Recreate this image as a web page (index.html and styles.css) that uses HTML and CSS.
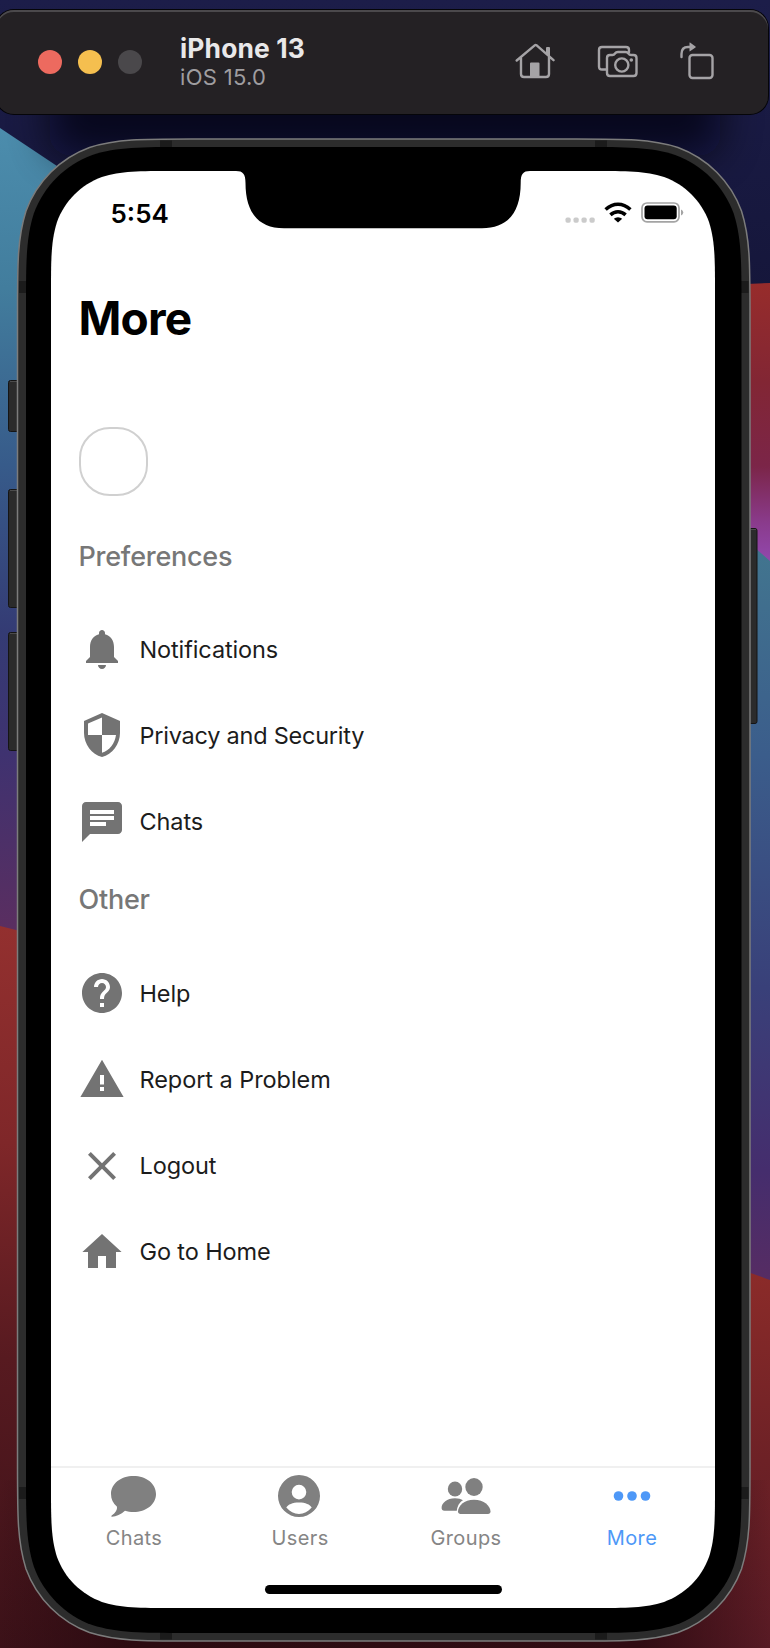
FILE: index.html
```html
<!DOCTYPE html>
<html lang="en">
<head>
<meta charset="utf-8">
<title>iPhone 13 – More</title>
<link rel="stylesheet" href="styles.css">
</head>
<body>
<div class="desktop">
  <svg class="backdrop" viewBox="0 0 770 1648" aria-hidden="true">
    <defs>
      <linearGradient id="navy" gradientUnits="userSpaceOnUse" x1="0" y1="0" x2="0" y2="300"><stop offset="0" stop-color="#1c1d49"/><stop offset="1" stop-color="#15163a"/></linearGradient>
      <linearGradient id="leftBlue" gradientUnits="userSpaceOnUse" x1="0" y1="128" x2="0" y2="930">
        <stop offset="0" stop-color="#4c8dad"/><stop offset=".2" stop-color="#427d9d"/><stop offset=".42" stop-color="#375b8a"/><stop offset=".63" stop-color="#343b74"/><stop offset=".78" stop-color="#3f3270"/><stop offset="1" stop-color="#5a2e60"/>
      </linearGradient>
      <linearGradient id="leftRed" gradientUnits="userSpaceOnUse" x1="0" y1="925" x2="0" y2="1648">
        <stop offset="0" stop-color="#93302f"/><stop offset=".3" stop-color="#7f2729"/><stop offset=".6" stop-color="#571a20"/><stop offset="1" stop-color="#3b1118"/>
      </linearGradient>
      <linearGradient id="rightRed" gradientUnits="userSpaceOnUse" x1="0" y1="283" x2="0" y2="565">
        <stop offset="0" stop-color="#972c2b"/><stop offset=".35" stop-color="#822634"/><stop offset=".65" stop-color="#7b2548"/><stop offset=".85" stop-color="#8a3b8c"/><stop offset="1" stop-color="#9349b0"/>
      </linearGradient>
      <linearGradient id="rightBlue" gradientUnits="userSpaceOnUse" x1="0" y1="550" x2="0" y2="1280">
        <stop offset="0" stop-color="#42758f"/><stop offset=".28" stop-color="#3b5d8b"/><stop offset=".6" stop-color="#394079"/><stop offset=".85" stop-color="#452d6d"/><stop offset="1" stop-color="#562c63"/>
      </linearGradient>
      <linearGradient id="rightDark" gradientUnits="userSpaceOnUse" x1="0" y1="1273" x2="0" y2="1648">
        <stop offset="0" stop-color="#8b2b29"/><stop offset=".5" stop-color="#6d2126"/><stop offset="1" stop-color="#571a24"/>
      </linearGradient>
      <linearGradient id="bottom" x1="0" y1="0" x2="1" y2="0">
        <stop offset="0" stop-color="#2c0b11" stop-opacity="0"/><stop offset=".17" stop-color="#2c0b11"/><stop offset=".83" stop-color="#300c13"/><stop offset="1" stop-color="#300c13" stop-opacity="0"/>
      </linearGradient>
      <filter id="soft" x="-20%" y="-100%" width="140%" height="300%"><feGaussianBlur stdDeviation="20"/></filter>
    </defs>
    <rect width="770" height="1648" fill="url(#navy)"/>
    <path d="M0 128L60 168V940H0Z" fill="url(#leftBlue)"/>
    <path d="M0 926L60 941V1648H0Z" fill="url(#leftRed)"/>
    <path d="M60 1500H400V1648H60Z" fill="url(#leftRed)"/>
    <path d="M400 1500H770V1648H400Z" fill="url(#rightDark)"/>
    <path d="M700 286L770 283V570H700Z" fill="url(#rightRed)"/>
    <path d="M700 500L770 561V1290H700Z" fill="url(#rightBlue)"/>
    <path d="M700 1255L770 1280V1648H700Z" fill="url(#rightDark)"/>
    <rect y="1480" width="770" height="168" fill="url(#bottom)"/>
    <rect x="50" y="70" width="670" height="85" rx="20" fill="#05060f" filter="url(#soft)" opacity=".7"/>

    <g fill="#2b2b2b" stroke="#151515">
      <rect x="8.500" y="380.500" width="14" height="51" rx="2"/>
      <rect x="8.500" y="489.500" width="14" height="118" rx="2"/>
      <rect x="8.500" y="632.500" width="14" height="118" rx="2"/>
      <rect x="745" y="528.500" width="12" height="195" rx="2"/>
    </g>
    <path class="button-shine" d="M10 381.500H18M10 490.500H18M10 633.500H18M751 529.500H756"/>

    <path class="rim" d="M191.800 139H575.700C625.900 139 651 139 678 147.500C707.500 158.300 730.700 181.500 741.500 211C750 238 750 263 750 313V1466.700C750 1516.900 750 1542 741.500 1569C730.700 1598.500 707.500 1621.700 678 1632.500C651 1641 625.900 1641 575.700 1641H191.800C141.600 1641 116.500 1641 89.500 1632.500C60 1621.700 36.800 1598.500 26 1569C17.500 1542 17.500 1516.900 17.500 1466.700V313C17.500 263 17.500 238 26 211C36.800 181.500 60 158.300 89.500 147.500C116.500 139 141.600 139 191.800 139Z"/>
    <path fill="#1b1b1b" d="M160 140.500H172V148H160ZM595 140.500H607V148H595ZM160 1632H172V1639.500H160ZM595 1632H607V1639.500H595ZM19 281H27V293H19ZM741 281H748.500V293H741ZM19 1487H27V1499H19ZM741 1487H748.500V1499H741Z"/>
    <path fill="#000" d="M186.500 147H581C627.200 147 650.300 147 675.200 154.900C702.400 164.800 723.700 186.100 733.600 213.300C741.500 238.200 741.500 261.300 741.500 307.500V1472.500C741.500 1518.700 741.500 1541.800 733.600 1566.700C723.700 1593.900 702.400 1615.200 675.200 1625.100C650.300 1633 627.200 1633 581 1633H186.500C140.300 1633 117.200 1633 92.300 1625.100C65.100 1615.200 43.800 1593.900 33.900 1566.700C26 1541.800 26 1518.700 26 1472.500V307.500C26 261.300 26 238.200 33.900 213.300C43.800 186.100 65.100 164.800 92.300 154.900C117.200 147 140.300 147 186.500 147Z"/>
    <path fill="#fff" d="M174.200 171H591.800C627.300 171 645 171 664.100 177C685 184.600 701.400 201 709 221.900C715 241 715 258.700 715 294.200V1484.800C715 1520.300 715 1538 709 1557.100C701.400 1578 685 1594.400 664.100 1602C645 1608 627.300 1608 591.800 1608H174.200C138.700 1608 121 1608 101.900 1602C81 1594.400 64.600 1578 57 1557.100C51 1538 51 1520.300 51 1484.800V294.200C51 258.700 51 241 57 221.900C64.600 201 81 184.600 101.900 177C121 171 138.700 171 174.200 171Z"/>
    <path fill="#000" d="M236 170V171C243 171 245.500 174 245.500 183C245.500 212 258 228.300 284 228.300H482C508 228.300 520.700 212 520.700 183C520.700 174 523 171 530 171V170Z"/>
  </svg>

  <header class="toolbar">
    <div class="lights"><i class="light red"></i><i class="light yellow"></i><i class="light off"></i></div>
    <div class="device"><strong class="device-name">iPhone 13</strong><span class="device-os">iOS 15.0</span></div>
    <div class="tools">
      <svg width="40" height="38" viewBox="0 0 40 38" class="tool"><path d="M1.700 18.500L20 3.200Q20.700 2.700 21.400 3.200L38.500 18.200M6 16V32Q6 35 9 35H31Q34 35 34 32V15"/><path class="solid" d="M15 21.500Q15 20.500 16 20.500H23.500Q24.500 20.500 24.500 21.500V35H15ZM31 6Q31 5 32 5H34Q35 5 35 6V15.500L31 12Z"/></svg>
      <svg width="41" height="34" viewBox="0 0 41 34" class="tool"><path d="M9 25.500H5Q2 25.500 2 22.500V6Q2 3 5 3H29Q32 3 32 6V8M10 14Q10 11 13 11H15.500Q17 11 18 9.500Q19 8 21 8H28.500Q30.500 8 31.500 9.500Q32.500 11 34 11H36.500Q39.500 11 39.500 14V29Q39.500 32 36.500 32H13Q10 32 10 29Z"/><circle cx="24.800" cy="21" r="6.600"/><circle class="solid" cx="34.300" cy="16" r="1.800"/></svg>
      <svg width="34" height="38" viewBox="0 0 34 38" class="tool"><rect x="9.500" y="13" width="23" height="23" rx="3"/><path d="M1.500 15V12Q1.500 5 8 5H10.500"/><path class="solid" d="M9.500 .8Q9.500 .2 10 .6L15.500 4.500Q16 5 15.500 5.500L10 9.300Q9.500 9.600 9.500 9Z"/></svg>
    </div>
  </header>

  <main class="screen">
    <div class="status">
      <span class="time">5:54</span>
      <div class="signals">
        <svg width="30" height="6" viewBox="0 0 30 6" class="dots"><g fill="#cbcbcb"><rect x=".5" y=".5" width="5.200" height="5.200" rx="1.700"/><rect x="8.500" y=".5" width="5.200" height="5.200" rx="1.700"/><rect x="16.500" y=".5" width="5.200" height="5.200" rx="1.700"/><rect x="24.500" y=".5" width="5.200" height="5.200" rx="1.700"/></g></svg>
        <svg width="28" height="21" viewBox="0 0 28 21" class="wifi"><path fill="none" stroke="#000" stroke-width="3.500" d="M1.600 7.500Q7.300 2.200 14 2.200T26.400 7.500M6.400 12.900Q9.800 9.800 14 9.800T21.600 12.900"/><path d="M14 20.500L9.800 16.800Q11.500 15.200 14 15.200T18.200 16.800Z"/></svg>
        <svg width="43" height="21" viewBox="0 0 43 21" class="battery"><rect x="1" y="1" width="37" height="18.800" rx="5" fill="none" stroke="#a4a4a4" stroke-width="1.700"/><rect x="3.500" y="3.500" width="32.200" height="13.800" rx="3"/><path fill="#a4a4a4" d="M40 7.500Q42.300 8.500 42.300 10.500T40 13.500Z"/></svg>
      </div>
    </div>

    <h1 class="title">More</h1>
    <div class="avatar"></div>

    <section class="group">
      <h2 class="group-title">Preferences</h2>
      <ul class="list">
        <li class="item"><svg viewBox="0 0 24 24" class="icon"><path d="M12 22c1.100 0 2-.9 2-2h-4c0 1.100.89 2 2 2zm6-6v-5c0-3.070-1.640-5.640-4.500-6.320V4c0-.83-.67-1.500-1.500-1.500s-1.500.67-1.500 1.500v.68C7.630 5.360 6 7.920 6 11v5l-2 2v1h16v-1l-2-2z"/></svg><span>Notifications</span></li>
        <li class="item privacy"><svg viewBox="0 0 24 24" class="icon"><path d="M12 1L3 5v6c0 5.550 3.840 10.740 9 12 5.160-1.260 9-6.450 9-12V5l-9-4zm0 10.990h7c-.53 4.120-3.280 7.790-7 8.940V12H5V6.300l7-3.110v8.800z"/></svg><span>Privacy and Security</span></li>
        <li class="item"><svg viewBox="0 0 24 24" class="icon"><path d="M20 2H4c-1.100 0-1.990.9-1.990 2L2 22l4-4h14c1.100 0 2-.9 2-2V4c0-1.100-.9-2-2-2zM6 9h12v2H6V9zm8 5H6v-2h8v2zm4-6H6V6h12v2z"/></svg><span>Chats</span></li>
      </ul>
    </section>

    <section class="group">
      <h2 class="group-title">Other</h2>
      <ul class="list">
        <li class="item"><svg viewBox="0 0 24 24" class="icon"><path d="M12 2C6.480 2 2 6.480 2 12s4.480 10 10 10 10-4.480 10-10S17.520 2 12 2zm1 17h-2v-2h2v2zm2.070-7.750l-.9.920C13.450 12.900 13 13.500 13 15h-2v-.5c0-1.100.45-2.100 1.170-2.830l1.240-1.260c.37-.36.59-.86.59-1.410 0-1.100-.9-2-2-2s-2 .9-2 2H8c0-2.210 1.790-4 4-4s4 1.790 4 4c0 .88-.36 1.680-.93 2.250z"/></svg><span>Help</span></li>
        <li class="item report"><svg viewBox="0 0 24 24" class="icon"><path d="M1.200 21h21.600L12 2.400 1.200 21zM13 18h-2v-2h2v2zm0-3.200h-2V10h2v4.800z"/></svg><span>Report a Problem</span></li>
        <li class="item"><svg viewBox="0 0 24 24" class="icon"><path d="M19 6.410L17.590 5 12 10.590 6.410 5 5 6.410 10.590 12 5 17.590 6.410 19 12 13.410 17.590 19 19 17.590 13.410 12z"/></svg><span>Logout</span></li>
        <li class="item"><svg viewBox="0 0 24 24" class="icon"><path d="M10 20v-6h4v6h5v-8h2.800L12 3 2.200 12H5v8z"/></svg><span>Go to Home</span></li>
      </ul>
    </section>

    <nav class="tabs">
      <a class="tab"><svg class="tab-icon" viewBox="0 0 50 44"><path d="M24.500 2C37 2 47 9.500 47 20S37 38 24.500 38C21.500 38 18.500 37.600 16 36.800C12 40.500 7 42.500 3 42.700C2 42.700 2 42 2.700 41.500C6.500 39 8.500 36 8 32.800C4 29.500 2 25 2 20C2 9.500 12 2 24.500 2Z"/></svg><span>Chats</span></a>
      <a class="tab"><svg class="tab-icon" viewBox="0 0 50 44"><path fill-rule="evenodd" d="M24 1A21 21 0 1 1 24 43A21 21 0 1 1 24 1ZM24 10.800A7.300 7.300 0 1 0 24 25.400A7.300 7.300 0 1 0 24 10.800ZM11.300 33.500C15 37.800 19 39.900 24 39.900S33 37.800 36.700 33.500C35 30.500 30.500 28.500 24 28.500S13 30.500 11.300 33.500Z"/></svg><span>Users</span></a>
      <a class="tab"><svg class="tab-icon" viewBox="0 0 50 44"><ellipse cx="14" cy="15" rx="7.200" ry="7.500"/><path d="M14 24.300C17.500 24.300 20 25.200 22 26.300C18.500 28.500 16.500 31.500 15.800 36.800H3.500C1.500 36.800 .6 35.500 .6 34C.6 29 6 24.300 14 24.300Z"/><ellipse cx="33" cy="13" rx="8.700" ry="9"/><path d="M33 25.700C43 25.700 49.500 32 49.500 37.500C49.500 39 48.500 40 47 40H19.500C18 40 17 39 17 37.500C17 32 23 25.700 33 25.700Z"/></svg><span>Groups</span></a>
      <a class="tab active"><svg class="tab-icon" viewBox="0 0 50 44"><circle cx="11.500" cy="22" r="4.800"/><circle cx="25" cy="22" r="4.800"/><circle cx="38.500" cy="22" r="4.800"/></svg><span>More</span></a>
    </nav>
    <div class="home-bar"></div>
  </main>
</div>
</body>
</html>
```
FILE: styles.css
```css
* { box-sizing: border-box; }
body { margin: 0; font-family: Inter, "Liberation Sans", sans-serif; }
.desktop { position: relative; width: 770px; height: 1648px; overflow: hidden; padding-top: 10px; }
.backdrop { position: absolute; left: 0; top: 0; width: 770px; height: 1648px; }
.rim { fill: #2c2c2c; stroke: #7c7c7c; stroke-width: 1.5; }
.button-shine { stroke: #4c4c4c; }

.toolbar {
  position: relative; display: flex; align-items: center;
  width: 772px; height: 104px; margin-left: -4px; padding: 0 54px 0 42px;
  background: #242124; border-radius: 18px;
  box-shadow: 0 0 0 1px #050509, inset 0 2px 0 #4b494c;
}
.lights { display: flex; gap: 16px; }
.light { width: 24px; height: 24px; border-radius: 50%; }
.red { background: #ed6a5f; }
.yellow { background: #f5bf4f; }
.off { background: #4a484b; }
.device { display: flex; flex-direction: column; margin-left: 38px; padding-top: 1px; white-space: nowrap; }
.device-name { font-size: 26.4px; line-height: 30px; font-weight: 700; color: #e9e8e9; letter-spacing: .15px; }
.device-os { font-size: 22px; line-height: 29px; color: #9f9da0; letter-spacing: .3px; }
.tools { display: flex; align-items: center; margin-left: auto; padding-bottom: 3px; gap: 42px; }
.tool { fill: none; stroke: #a5a3a6; stroke-width: 2.4; stroke-linecap: round; stroke-linejoin: round; }
.tool .solid { fill: #a5a3a6; stroke: none; }

.screen { position: relative; width: 664px; height: 1437px; margin: 57px 0 0 51px; display: flex; flex-direction: column; }
.status { display: flex; justify-content: space-between; height: 60px; padding: 28px 31px 0 59.5px; }
.time { font-size: 26px; line-height: 29px; font-weight: 600; }
.signals { display: flex; align-items: flex-start; padding-top: 3px; gap: 9px; }
.dots { margin-top: 15px; }
.title { margin: 62px 0 0 27.5px; font-size: 46px; line-height: 50px; font-weight: 700; letter-spacing: -.8px; }
.avatar { width: 69px; height: 69px; margin: 84px 0 0 28px; border: 2px solid #d0d0d0; border-radius: 31px; }
.group { padding-left: 27px; }
.group-title { margin: 0; height: 110px; padding: 44px 0 0 .5px; font-size: 27px; line-height: 34px; font-weight: 450; color: #777; letter-spacing: -.25px; }
.list { margin: 0; padding: 0; list-style: none; }
.item { display: flex; align-items: center; height: 86.3px; font-size: 23.5px; letter-spacing: -.12px; color: #1c1c1c; }
.privacy { letter-spacing: -.24px; }
.report { letter-spacing: -.06px; }
.icon { width: 48px; height: 48px; margin-right: 13.5px; fill: #737373; }
.group + .group .group-title { height: 85px; padding-top: 18px; }

.tabs { display: grid; grid-template-columns: repeat(4, 1fr); height: 94px; margin-top: auto; padding-top: 6px; border-top: 2px solid #f0f0f0; }
.tab { display: flex; flex-direction: column; align-items: center; color: #858585; font-size: 20px; line-height: 28px; letter-spacing: .4px; gap: 6px; }
.tab-icon { width: 50px; height: 44px; fill: #808080; }
.active { color: #4e98f7; }
.active .tab-icon { fill: #4e98f7; }
.home-bar { width: 237px; height: 9px; margin: 25px auto 14px; background: #000; border-radius: 5px; }
```
